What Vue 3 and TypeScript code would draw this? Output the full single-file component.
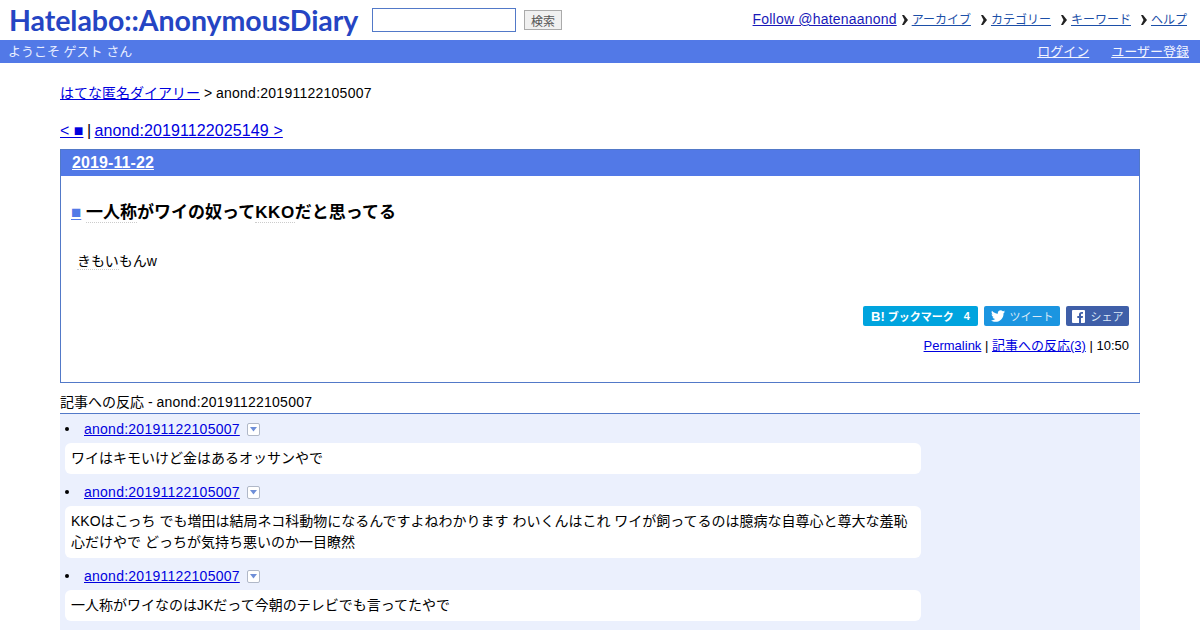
<script setup lang="ts">
interface Reaction { id: string; lines: string }
const reactions: Reaction[] = [
  { id: 'anond:20191122105007', lines: 'ワイはキモいけど金はあるオッサンやで' },
  { id: 'anond:20191122105007', lines: 'KKOはこっち でも増田は結局ネコ科動物になるんですよねわかります わいくんはこれ ワイが飼ってるのは臆病な自尊心と尊大な羞恥心だけやで どっちが気持ち悪いのか一目瞭然' },
  { id: 'anond:20191122105007', lines: '一人称がワイなのはJKだって今朝のテレビでも言ってたやで' },
]
const navs = ['アーカイブ', 'カテゴリー', 'キーワード', 'ヘルプ']
</script>

<template>
  <div class="page">
    <header class="top">
      <div class="top-left">
        <span class="logo">Hatelabo::AnonymousDiary</span>
        <input class="search" type="text" />
        <button class="search-btn" type="button">検索</button>
      </div>
      <div class="top-right">
        <a class="follow" href="#">Follow @hatenaanond</a>
        <span v-for="n in navs" :key="n" class="nav-item">
          <svg class="arrow" width="6" height="10" viewBox="0 0 6 10"><path d="M0 0h2l4 5-4 5H0l2.500-5z" fill="#222" /></svg>
          <a href="#">{{ n }}</a>
        </span>
      </div>
    </header>
    <div class="bar">
      <span>ようこそ ゲスト さん</span>
      <div class="bar-links"><a href="#">ログイン</a><a href="#">ユーザー登録</a></div>
    </div>
    <main class="main">
      <div class="crumb"><a href="#">はてな匿名ダイアリー</a> &gt; <span class="lat">anond:20191122105007</span></div>
      <div class="pager"><a href="#">&lt; ■</a> <span class="sep">|</span> <a class="lat-lg" href="#">anond:20191122025149 &gt;</a></div>
      <section class="day">
        <h2 class="date"><a href="#">2019-11-22</a></h2>
        <div class="body">
          <h3 class="title"><a class="sq" href="#">■</a> <span class="kw">一人称</span>がワイの奴って<span class="kw kko">KKO</span>だと思ってる</h3>
          <p class="text"><span class="kw">きもい</span>もんw</p>
          <div class="share">
            <span class="btn hb"><b class="hb-b">B!</b><b>ブックマーク</b><i>4</i></span>
            <span class="btn tw">
              <svg width="14" height="12" viewBox="0 0 24 20"><path fill="#fff" d="M24 2.400c-.9.4-1.800.7-2.800.8 1-.6 1.800-1.600 2.200-2.700-1 .6-2 1-3.100 1.200C19.300.7 18 0 16.600 0c-2.700 0-4.900 2.200-4.900 4.900 0 .4 0 .8.100 1.100C7.700 5.800 4.100 3.900 1.700.9 1.200 1.600 1 2.500 1 3.400c0 1.700.9 3.200 2.200 4.100-.8 0-1.600-.2-2.200-.6v.1c0 2.400 1.700 4.400 3.900 4.800-.7.200-1.500.2-2.200.100.6 2 2.400 3.400 4.600 3.400-2.200 1.700-4.900 2.500-7.300 2.300C2.200 19.100 4.800 20 7.500 20c9.100 0 14-7.500 14-14v-.6c1-.7 1.800-1.600 2.500-3z" /></svg>
              <span>ツイート</span>
            </span>
            <span class="btn fb">
              <svg width="13" height="13" viewBox="0 0 13 13"><rect width="13" height="13" rx="1" fill="#fff" /><path fill="#3f5fa8" d="M9 13V8h1.700l.3-2H9V4.800c0-.6.200-1 1-1h1V2.100C10.800 2 10.200 2 9.600 2 8 2 7 3 7 4.600V6H5.300v2H7v5z" /></svg>
              <span>シェア</span>
            </span>
          </div>
          <div class="foot"><a href="#">Permalink</a> | <a href="#">記事への反応(3)</a> | 10:50</div>
        </div>
      </section>
      <h4 class="ref-title">記事への反応 - <span class="lat">anond:20191122105007</span></h4>
      <ul class="refs">
        <li v-for="(r, i) in reactions" :key="i" class="ref">
          <div class="ref-head">
            <span class="bullet"></span>
            <a class="lat" href="#">{{ r.id }}</a>
            <span class="drop"><svg width="7" height="5" viewBox="0 0 7 5"><path d="M0 0h7L3.500 4.500z" fill="#6f8fd8" /></svg></span>
          </div>
          <div class="ref-body">{{ r.lines }}</div>
        </li>
      </ul>
    </main>
  </div>
</template>

<style>
html, body { margin: 0; background: #fff; overflow: hidden; }
</style>

<style scoped>
.page {
  width: 1200px;
  height: 630px;
  overflow: hidden;
  font-family: "Liberation Sans", "Noto Sans CJK JP", sans-serif;
  font-size: 14px;
  color: #000;
}
a { color: #0000de; }
.lat { letter-spacing: 0.25px; }
.lat-lg { letter-spacing: 0.1px; }
.sep { margin: 0 -1px 0 -1px; }
.top {
  height: 40px;
  display: flex;
  justify-content: space-between;
  padding: 0 13px 0 9px;
}
.top-left { display: flex; align-items: center; }
.logo {
  width: 349px;
  font-family: "Lato", "Liberation Sans", sans-serif;
  font-weight: 700;
  font-size: 28.500px;
  letter-spacing: -0.05px;
  color: #2545c3;
  white-space: nowrap;
  line-height: 40px;
}
.search {
  box-sizing: border-box;
  width: 144px;
  height: 24px;
  margin: 0 0 0 14px;
  border: 1px solid #5279c8;
  padding: 0;
  background: #fff;
}
.search-btn {
  box-sizing: border-box;
  width: 38px;
  height: 20px;
  margin: 0 0 0 8px;
  padding: 0;
  border: 1px solid #aaa;
  background: #f0f0f0;
  color: #555;
  font: 12px "Noto Sans CJK JP", sans-serif;
}
.top-right {
  display: flex;
  align-items: baseline;
  padding-top: 10px;
  font-size: 12px;
}
.follow { font-size: 14px; letter-spacing: 0.2px; margin-right: 5px; color: #1a1ab8; }
.nav-item { margin-right: 10px; white-space: nowrap; }
.nav-item:last-child { margin-right: 0; }
.nav-item a { color: #1c4fa8; }
.arrow { vertical-align: -1px; margin-right: 4px; }
.bar {
  height: 23px;
  background: #5279e7;
  color: #e8eeff;
  display: flex;
  justify-content: space-between;
  align-items: center;
  padding: 0 11px 3px 8px;
  box-sizing: border-box;
  font-size: 13px;
}
.bar-links { display: flex; gap: 22px; }
.bar a { color: #f2f5ff; }
.main { padding: 21px 60px 0; }
.crumb { line-height: 18px; }
.pager { font-size: 16px; line-height: 20px; margin-top: 19px; }
.day {
  margin-top: 8px;
  border: 1px solid #5279c8;
  height: 234px;
  box-sizing: border-box;
}
.date {
  margin: 0;
  height: 26px;
  background: #5279e7;
  padding-left: 11px;
  font-size: 16px;
  letter-spacing: 0.1px;
  line-height: 26px;
}
.date a { color: #fff; }
.body { padding: 0 10px 0 10px; }
.title {
  margin: 0;
  padding-top: 26px;
  font-size: 17px;
  line-height: 22px;
}
.sq { color: #5279e7; font-size: 17px; font-weight: 400; }
.kw { border-bottom: 1px dotted #ccc; }
.kko { letter-spacing: 0.6px; }
.text { margin: 27px 0 0 6px; line-height: 20px; }
.share {
  display: flex;
  justify-content: flex-end;
  gap: 6px;
  margin-top: 35px;
}
.btn {
  height: 20px;
  box-sizing: border-box;
  border-radius: 2px;
  color: #fff;
  font-size: 11px;
  display: flex;
  align-items: center;
  justify-content: center;
  gap: 5px;
}
.hb { width: 115px; background: #00a4de; gap: 3px; }
.hb-b { font-size: 13px; }
.hb i { font-style: normal; font-weight: 700; margin-left: 7px; }
.tw { width: 76px; background: #1b95e0; }
.tw span, .fb span { color: #dbe9f7; }
.fb { width: 63px; background: #3f5fa8; gap: 6px; }
.foot { text-align: right; font-size: 13px; margin-top: 10px; line-height: 20px; }
.ref-title {
  margin: 9px 0 0;
  padding-bottom: 1px;
  font-weight: 400;
  font-size: 14px;
  line-height: 20px;
  border-bottom: 1px solid #5279c8;
}
.refs {
  list-style: none;
  margin: 0;
  padding: 5px 0 0 5px;
  background: #ebf0fd;
  height: 300px;
}
.ref { width: 856px; margin-bottom: 8px; }
.ref-head { height: 20px; display: flex; align-items: center; line-height: 20px; }
.bullet { width: 4px; height: 4px; border-radius: 50%; background: #000; margin-right: 15px; }
.drop {
  box-sizing: border-box;
  width: 13px;
  height: 13px;
  margin-left: 7px;
  border: 1px solid #b0b8c8;
  border-radius: 2px;
  background: #fff;
  display: flex;
  align-items: center;
  justify-content: center;
}
.ref-body {
  margin-top: 4px;
  background: #fff;
  border-radius: 6px;
  padding: 5px 6px;
  line-height: 21px;
}
</style>
